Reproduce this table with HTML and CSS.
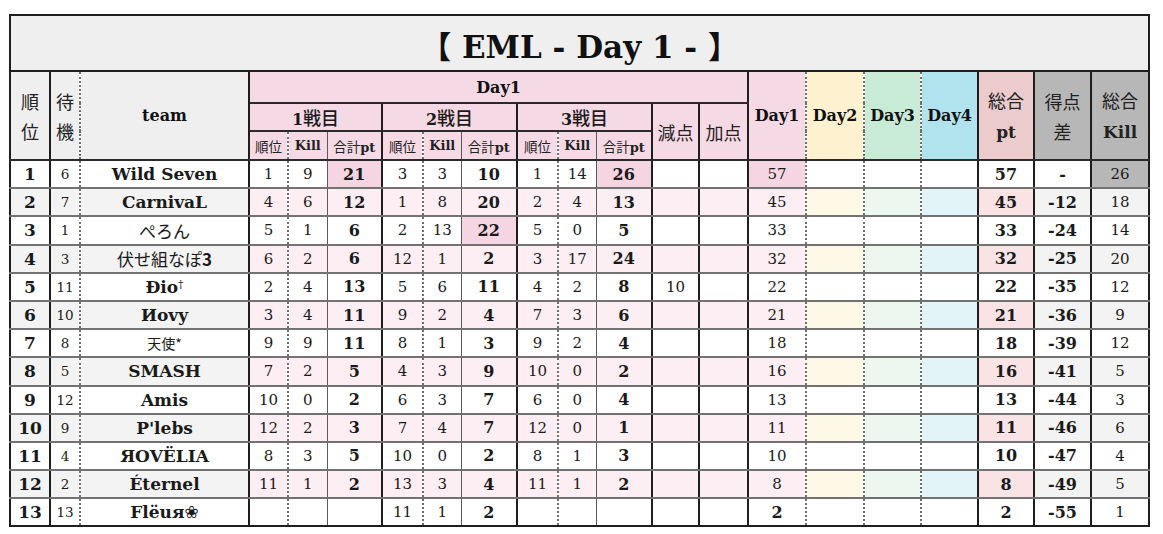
FILE: index.html
```html
<!DOCTYPE html>
<html lang="ja">
<head>
<meta charset="utf-8">
<title>EML - Day 1 -</title>
<link rel="stylesheet" href="styles.css">
</head>
<body>
<table class="board">
<colgroup>
<col style="width:40px"><col style="width:30px"><col style="width:169px">
<col style="width:39px"><col style="width:39px"><col style="width:55px">
<col style="width:41px"><col style="width:38px"><col style="width:56px">
<col style="width:41px"><col style="width:38px"><col style="width:56px">
<col style="width:47px"><col style="width:49px">
<col style="width:58px"><col style="width:58px"><col style="width:57px"><col style="width:57px">
<col style="width:56px"><col style="width:57px"><col style="width:58px">
</colgroup>
<thead>
<tr class="r-title"><th colspan="21" class="title">【 EML - Day 1 - 】</th></tr>
<tr class="r-h1">
<th rowspan="3" class="hl big sR">順<br>位</th>
<th rowspan="3" class="hl big dR">待<br>機</th>
<th rowspan="3" class="hl en sR">team</th>
<th colspan="11" class="hp en sR sB">Day1</th>
<th rowspan="3" class="hp en dR">Day1</th>
<th rowspan="3" class="hy en dR">Day2</th>
<th rowspan="3" class="hg en dR">Day3</th>
<th rowspan="3" class="hb en sR">Day4</th>
<th rowspan="3" class="hr big sR">総合<br><span class="en">pt</span></th>
<th rowspan="3" class="hx big sR">得点<br>差</th>
<th rowspan="3" class="hx big">総合<br><span class="en">Kill</span></th>
</tr>
<tr class="r-h2">
<th colspan="3" class="hp game sR sB"><b class="num">1</b>戦目</th>
<th colspan="3" class="hp game sR sB"><b class="num">2</b>戦目</th>
<th colspan="3" class="hp game sR sB"><b class="num">3</b>戦目</th>
<th rowspan="2" class="hp big sR">減点</th>
<th rowspan="2" class="hp big sR">加点</th>
</tr>
<tr class="r-h3">
<th class="hp sub dR">順位</th><th class="hp sub en thR">Kill</th><th class="hp sub sR">合計<span class="en">pt</span></th>
<th class="hp sub dR">順位</th><th class="hp sub en thR">Kill</th><th class="hp sub sR">合計<span class="en">pt</span></th>
<th class="hp sub dR">順位</th><th class="hp sub en thR">Kill</th><th class="hp sub sR">合計<span class="en">pt</span></th>
</tr>
</thead>
<tbody>
<tr>
<td class="rank sR">1</td><td class="wait dR">6</td><td class="team sR">Wild Seven</td>
<td class="dR">1</td><td class="thR">9</td><td class="pt sR hi">21</td>
<td class="dR">3</td><td class="thR">3</td><td class="pt sR">10</td>
<td class="dR">1</td><td class="thR">14</td><td class="pt sR hi">26</td>
<td class="sR"></td><td class="sR"></td>
<td class="dR hi">57</td><td class="dR"></td><td class="dR"></td><td class="sR"></td>
<td class="pt sR">57</td><td class="pt sR">-</td><td class="kill hk">26</td>
</tr>
<tr class="alt">
<td class="rank sR">2</td><td class="wait dR">7</td><td class="team sR">CarnivaL</td>
<td class="dR">4</td><td class="thR">6</td><td class="pt sR">12</td>
<td class="dR">1</td><td class="thR">8</td><td class="pt sR">20</td>
<td class="dR">2</td><td class="thR">4</td><td class="pt sR">13</td>
<td class="sR"></td><td class="sR"></td>
<td class="dR">45</td><td class="dR d2"></td><td class="dR d3"></td><td class="sR d4"></td>
<td class="pt sR tot">45</td><td class="pt sR">-12</td><td class="kill">18</td>
</tr>
<tr>
<td class="rank sR">3</td><td class="wait dR">1</td><td class="team jp sR">ぺろん</td>
<td class="dR">5</td><td class="thR">1</td><td class="pt sR">6</td>
<td class="dR">2</td><td class="thR">13</td><td class="pt sR hi">22</td>
<td class="dR">5</td><td class="thR">0</td><td class="pt sR">5</td>
<td class="sR"></td><td class="sR"></td>
<td class="dR">33</td><td class="dR"></td><td class="dR"></td><td class="sR"></td>
<td class="pt sR">33</td><td class="pt sR">-24</td><td class="kill">14</td>
</tr>
<tr class="alt">
<td class="rank sR">4</td><td class="wait dR">3</td><td class="team jp sR">伏せ組なぽ<b class="en">3</b></td>
<td class="dR">6</td><td class="thR">2</td><td class="pt sR">6</td>
<td class="dR">12</td><td class="thR">1</td><td class="pt sR">2</td>
<td class="dR">3</td><td class="thR">17</td><td class="pt sR">24</td>
<td class="sR"></td><td class="sR"></td>
<td class="dR">32</td><td class="dR d2"></td><td class="dR d3"></td><td class="sR d4"></td>
<td class="pt sR tot">32</td><td class="pt sR">-25</td><td class="kill">20</td>
</tr>
<tr>
<td class="rank sR">5</td><td class="wait dR">11</td><td class="team sR">Đio<sup>†</sup></td>
<td class="dR">2</td><td class="thR">4</td><td class="pt sR">13</td>
<td class="dR">5</td><td class="thR">6</td><td class="pt sR">11</td>
<td class="dR">4</td><td class="thR">2</td><td class="pt sR">8</td>
<td class="sR">10</td><td class="sR"></td>
<td class="dR">22</td><td class="dR"></td><td class="dR"></td><td class="sR"></td>
<td class="pt sR">22</td><td class="pt sR">-35</td><td class="kill">12</td>
</tr>
<tr class="alt">
<td class="rank sR">6</td><td class="wait dR">10</td><td class="team sR">Иovy</td>
<td class="dR">3</td><td class="thR">4</td><td class="pt sR">11</td>
<td class="dR">9</td><td class="thR">2</td><td class="pt sR">4</td>
<td class="dR">7</td><td class="thR">3</td><td class="pt sR">6</td>
<td class="sR"></td><td class="sR"></td>
<td class="dR">21</td><td class="dR d2"></td><td class="dR d3"></td><td class="sR d4"></td>
<td class="pt sR tot">21</td><td class="pt sR">-36</td><td class="kill">9</td>
</tr>
<tr>
<td class="rank sR">7</td><td class="wait dR">8</td><td class="team jp small sR">天使*</td>
<td class="dR">9</td><td class="thR">9</td><td class="pt sR">11</td>
<td class="dR">8</td><td class="thR">1</td><td class="pt sR">3</td>
<td class="dR">9</td><td class="thR">2</td><td class="pt sR">4</td>
<td class="sR"></td><td class="sR"></td>
<td class="dR">18</td><td class="dR"></td><td class="dR"></td><td class="sR"></td>
<td class="pt sR">18</td><td class="pt sR">-39</td><td class="kill">12</td>
</tr>
<tr class="alt">
<td class="rank sR">8</td><td class="wait dR">5</td><td class="team sR">SMASH</td>
<td class="dR">7</td><td class="thR">2</td><td class="pt sR">5</td>
<td class="dR">4</td><td class="thR">3</td><td class="pt sR">9</td>
<td class="dR">10</td><td class="thR">0</td><td class="pt sR">2</td>
<td class="sR"></td><td class="sR"></td>
<td class="dR">16</td><td class="dR d2"></td><td class="dR d3"></td><td class="sR d4"></td>
<td class="pt sR tot">16</td><td class="pt sR">-41</td><td class="kill">5</td>
</tr>
<tr>
<td class="rank sR">9</td><td class="wait dR">12</td><td class="team sR">Amis</td>
<td class="dR">10</td><td class="thR">0</td><td class="pt sR">2</td>
<td class="dR">6</td><td class="thR">3</td><td class="pt sR">7</td>
<td class="dR">6</td><td class="thR">0</td><td class="pt sR">4</td>
<td class="sR"></td><td class="sR"></td>
<td class="dR">13</td><td class="dR"></td><td class="dR"></td><td class="sR"></td>
<td class="pt sR">13</td><td class="pt sR">-44</td><td class="kill">3</td>
</tr>
<tr class="alt">
<td class="rank sR">10</td><td class="wait dR">9</td><td class="team sR">P'lebs</td>
<td class="dR">12</td><td class="thR">2</td><td class="pt sR">3</td>
<td class="dR">7</td><td class="thR">4</td><td class="pt sR">7</td>
<td class="dR">12</td><td class="thR">0</td><td class="pt sR">1</td>
<td class="sR"></td><td class="sR"></td>
<td class="dR">11</td><td class="dR d2"></td><td class="dR d3"></td><td class="sR d4"></td>
<td class="pt sR tot">11</td><td class="pt sR">-46</td><td class="kill">6</td>
</tr>
<tr>
<td class="rank sR">11</td><td class="wait dR">4</td><td class="team sR">ЯOVËLIA</td>
<td class="dR">8</td><td class="thR">3</td><td class="pt sR">5</td>
<td class="dR">10</td><td class="thR">0</td><td class="pt sR">2</td>
<td class="dR">8</td><td class="thR">1</td><td class="pt sR">3</td>
<td class="sR"></td><td class="sR"></td>
<td class="dR">10</td><td class="dR"></td><td class="dR"></td><td class="sR"></td>
<td class="pt sR">10</td><td class="pt sR">-47</td><td class="kill">4</td>
</tr>
<tr class="alt">
<td class="rank sR">12</td><td class="wait dR">2</td><td class="team sR">Éternel</td>
<td class="dR">11</td><td class="thR">1</td><td class="pt sR">2</td>
<td class="dR">13</td><td class="thR">3</td><td class="pt sR">4</td>
<td class="dR">11</td><td class="thR">1</td><td class="pt sR">2</td>
<td class="sR"></td><td class="sR"></td>
<td class="dR">8</td><td class="dR d2"></td><td class="dR d3"></td><td class="sR d4"></td>
<td class="pt sR tot">8</td><td class="pt sR">-49</td><td class="kill">5</td>
</tr>
<tr class="last">
<td class="rank sR">13</td><td class="wait dR">13</td><td class="team sR">Flëuя<span class="flower">❀</span></td>
<td class="dR"></td><td class="thR"></td><td class="pt sR"></td>
<td class="dR">11</td><td class="thR">1</td><td class="pt sR">2</td>
<td class="dR"></td><td class="thR"></td><td class="pt sR"></td>
<td class="sR"></td><td class="sR"></td>
<td class="dR pt">2</td><td class="dR"></td><td class="dR"></td><td class="sR"></td>
<td class="pt sR">2</td><td class="pt sR">-55</td><td class="kill">1</td>
</tr>
</tbody>
</table>
</body>
</html>
```

FILE: styles.css
```css
html, body {
  margin: 0;
  padding: 0;
  background: #ffffff;
}

body {
  padding: 14px 0 0 9px;
  font-family: "DejaVu Serif", "Liberation Serif", "Noto Sans CJK JP", serif;
  color: #111;
}

.board {
  border-collapse: collapse;
  table-layout: fixed;
  width: 1139px;
  border: 2px solid #1e1e1e;
}

.board th,
.board td {
  padding: 0;
  text-align: center;
  vertical-align: middle;
  overflow: hidden;
  white-space: nowrap;
}

.r-title { height: 56px; }
.r-h1 { height: 32px; }
.r-h2 { height: 28px; }
.r-h3 { height: 29px; }
.board tbody tr { height: 28.2px; }

.board thead th {
  font-weight: normal;
  border-bottom: 2px solid #2a2a2a;
}

.board thead th.title {
  background: #efefef;
  font-family: "DejaVu Serif", "Noto Sans CJK JP", serif;
  font-size: 31px;
  font-weight: bold;
  border-bottom: 2px solid #1e1e1e;
  padding-top: 2px;
}

.board thead th.big {
  font-family: "Noto Sans CJK JP", sans-serif;
  font-size: 18px;
  line-height: 30px;
  color: #222;
}

.board thead th.big .en {
  font-family: "DejaVu Serif", serif;
  font-weight: bold;
  font-size: 17px;
}

.board thead th.en {
  font-family: "DejaVu Serif", serif;
  font-weight: bold;
  font-size: 16px;
}

.board thead th.game {
  font-family: "Noto Sans CJK JP", sans-serif;
  font-weight: 500;
  font-size: 18px;
  color: #1a1a1a;
}

.game .num {
  font-family: "DejaVu Serif", serif;
  font-weight: bold;
  font-size: 16px;
}

.board thead th.sub {
  font-family: "Noto Sans CJK JP", sans-serif;
  font-size: 13.5px;
  color: #222;
}

.board thead th.sub.en,
.board thead th.sub .en {
  font-family: "DejaVu Serif", serif;
  font-weight: bold;
  font-size: 13px;
}

/* header colours */
.hl { background: #efefef; }
.hp { background: #f5d9e4; }
.hy { background: #fdf1cf; }
.hg { background: #c8ebd6; }
.hb { background: #b1e3ee; }
.hr { background: #ebcbcc; }
.hx { background: #b7b7b7; }

/* vertical borders */
.sR { border-right: 2px solid #1e1e1e; }
.thR { border-right: 1px solid #5a5a5a; }
.dR { border-right: 2px dotted #6e6e6e; }

/* body cells */
.board tbody td {
  border-bottom: 2px solid #727272;
  font-size: 15px;
  color: #1a1a1a;
}

.board tbody tr.last td { border-bottom: 2px solid #1e1e1e; }

.board tbody td.rank {
  font-weight: bold;
  font-size: 17px;
}

.board tbody td.wait { font-size: 13.5px; }

.board tbody td.team {
  font-weight: bold;
  font-size: 17px;
}

.board tbody td.team.jp {
  font-family: "Noto Sans CJK JP", sans-serif;
  font-weight: normal;
  font-size: 17px;
}

.board tbody td.team.jp.small { font-size: 14px; }

.team .en { font-size: 17px; }

.team sup {
  font-size: 11px;
  font-weight: normal;
  vertical-align: 5px;
}

.flower {
  font-family: "DejaVu Sans", sans-serif;
  font-weight: normal;
  font-size: 17px;
}

.board tbody td.pt {
  font-weight: bold;
  font-size: 16px;
}

.board tbody td.kill { font-size: 15px; }

/* striped rows */
.alt td { background: #fdeef3; }
.alt td.rank,
.alt td.wait,
.alt td.team { background: #f3f3f3; }
.alt td.d2 { background: #fef8e6; }
.alt td.d3 { background: #ebf7ef; }
.alt td.d4 { background: #e3f4f9; }
.alt td.tot { background: #fae3e5; }
.alt td:nth-last-child(2),
.alt td:last-child { background: #f3f3f3; }

.board tbody td.hi { background: #f5d5e1; }
.board tbody td.hk { background: #b7b7b7; }
```
